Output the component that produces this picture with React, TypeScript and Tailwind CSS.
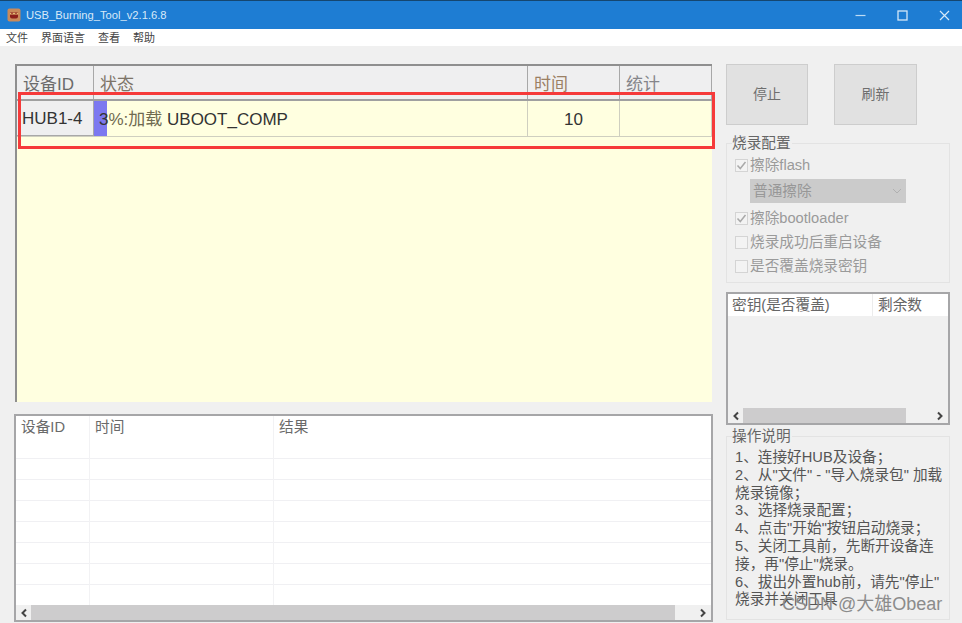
const font = "font-['Liberation_Sans','Noto_Sans_CJK_SC',sans-serif]";

function Chevron({ dir }: { dir: "l" | "r" }) {
  return (
    <svg width="8" height="10" viewBox="0 0 8 10" className="shrink-0">
      <path d={dir === "l" ? "M6 1.5 2.5 5 6 8.5" : "M2 1.5 5.5 5 2 8.5"} fill="none" stroke="#444" strokeWidth="2" />
    </svg>
  );
}

function Scrollbar({ thumbLeft, thumbWidth }: { thumbLeft: string; thumbWidth: string }) {
  return (
    <div className="h-[15px] shrink-0 flex items-center justify-between bg-[#f0f0f0] relative px-[4px]">
      <Chevron dir="l" />
      <div className={`absolute top-0 bottom-0 bg-[#cdcccd] ${thumbLeft} ${thumbWidth}`} />
      <Chevron dir="r" />
    </div>
  );
}

function HeadCell({ w, children, color = "text-[#6b6b6b]" }: { w: string; children: React.ReactNode; color?: string }) {
  return (
    <div className={`${w} h-full border-r border-[#a8a8a8] flex items-end pl-[6px] pb-[2px] text-[17px] leading-[24px] ${color}`}>
      {children}
    </div>
  );
}

function Check({ label, checked }: { label: string; checked?: boolean }) {
  return (
    <div className="flex items-center h-[24px] pl-[8px]">
      <div className="w-[13px] h-[13px] border border-[#d4d4d4] bg-[#f3f3f3] flex items-center justify-center shrink-0">
        {checked && (
          <svg width="11" height="11" viewBox="0 0 11 11">
            <path d="M1.5 5.5 4.3 8.5 9.5 2" fill="none" stroke="#a9a9a9" strokeWidth="1.5" />
          </svg>
        )}
      </div>
      <span className="ml-[2px] text-[14.67px] leading-[20px] text-[#9a9a9a] whitespace-nowrap">{label}</span>
    </div>
  );
}

function Group({ title, className, children }: { title: string; className: string; children: React.ReactNode }) {
  return (
    <div className={`relative border border-[#e3e3e3] ${className}`}>
      <span className="absolute left-[5px] -top-[10px] bg-[#f0f0f0] pr-[1px] text-[14.67px] leading-[18px] text-[#666]">{title}</span>
      {children}
    </div>
  );
}

const rows = [0, 1, 2, 3, 4, 5, 6];

const help = [
  "1、连接好HUB及设备；",
  '2、从"文件" - "导入烧录包" 加载',
  "烧录镜像；",
  "3、选择烧录配置；",
  '4、点击"开始"按钮启动烧录；',
  "5、关闭工具前，先断开设备连",
  '接，再"停止"烧录。',
  '6、拔出外置hub前，请先"停止"',
  "烧录并关闭工具",
];

export default function App() {
  return (
    <div className={`relative w-[962px] h-[623px] overflow-hidden bg-[#f0f0f0] flex flex-col ${font}`}>
      {/* title bar */}
      <div className="h-[29px] shrink-0 bg-[#1e7dd3] border-t border-[#15466f] flex items-center pl-[7px]">
        <svg width="14" height="14" viewBox="0 0 14 14" className="shrink-0">
          <rect x="0.5" y="0.5" width="13" height="13" rx="2" fill="#c98a5a" />
          <path d="M3 4.5h8v4a2 2 0 0 1-2 2H5a2 2 0 0 1-2-2z" fill="#8c1f1a" />
          <path d="M3 4.5l2 1.5 2-1.5 2 1.5 2-1.5v2H3z" fill="#e8c27a" />
        </svg>
        <span className="ml-[5px] text-[11.2px] leading-[16px] text-[#d8e9f8] whitespace-nowrap">USB_Burning_Tool_v2.1.6.8</span>
        <div className="ml-auto flex items-center h-full">
          <div className="w-[36px] flex justify-center">
            <svg width="11" height="11" viewBox="0 0 11 11"><path d="M0.5 5.5h10" stroke="#bcdcf5" strokeWidth="1.2" /></svg>
          </div>
          <div className="w-[48px] flex justify-center">
            <svg width="11" height="11" viewBox="0 0 11 11"><rect x="1" y="1" width="9" height="9" fill="none" stroke="#d5e8f8" strokeWidth="1.3" /></svg>
          </div>
          <div className="w-[36px] flex justify-center">
            <svg width="11" height="11" viewBox="0 0 11 11"><path d="M1 1l9 9M10 1l-9 9" stroke="#d5e8f8" strokeWidth="1.2" /></svg>
          </div>
        </div>
      </div>

      {/* menu */}
      <div className="h-[17px] shrink-0 bg-white flex items-center pl-[6px] gap-[13px] text-[11px] leading-[14px] text-[#444]">
        <span>文件</span>
        <span>界面语言</span>
        <span>查看</span>
        <span>帮助</span>
      </div>

      {/* body */}
      <div className="flex-1 flex pt-[18px] pl-[15px] min-h-0">
        {/* left */}
        <div className="w-[698px] shrink-0 flex flex-col">
          <div className="w-[697px] h-[338px] shrink-0 flex flex-col border-t-2 border-l-2 border-[#8f8f8f] bg-[#ffffe0]">
            <div className="h-[35px] shrink-0 flex bg-[#efeff0] border-b-2 border-[#a0a0a0]">
              <HeadCell w="w-[77px]">设备ID</HeadCell>
              <HeadCell w="w-[434px]" color="text-[#7d7468]">状态</HeadCell>
              <HeadCell w="w-[92px]" color="text-[#9b8064]">时间</HeadCell>
              <HeadCell w="w-[92px]" color="text-[#85858a]">统计</HeadCell>
            </div>
            <div className="h-[36px] shrink-0 flex border-b border-[#cfcfc0] text-[17px] leading-[20px] text-[#333]">
              <div className="w-[77px] bg-[#efeff0] border-r border-b border-[#a8a8a8] flex items-center pl-[5px] pt-[2px]">HUB1-4</div>
              <div className="w-[434px] relative border-r border-[#cfcfc0] flex items-center pl-[5px] pt-[2px] bg-[#ffffe0]">
                <div className="absolute left-0 top-0 bottom-0 w-[13px] bg-[#7c78f0]" />
                <span className="relative whitespace-nowrap">
                  3<span className="text-[#6f6a50]">%:加载</span> UBOOT_COMP
                </span>
              </div>
              <div className="w-[92px] border-r border-[#cfcfc0] flex items-center justify-center pt-[2px]">10</div>
              <div className="w-[92px] border-r border-[#cfcfc0]" />
            </div>
            <div className="flex-1" />
          </div>

          <div className="mt-[12px] -ml-[1px] w-[699px] h-[208px] shrink-0 flex flex-col border-2 border-[#a6a6a8] bg-white">
            <div className="flex-1 relative flex min-h-0 overflow-hidden">
              <div className="absolute inset-x-0 top-0 flex flex-col">
                <div className="h-[22px] flex text-[14.67px] leading-[22px] text-[#6a6a6a]">
                  <div className="w-[74px] pl-[5px]">设备ID</div>
                  <div className="w-[184px] pl-[5px]">时间</div>
                  <div className="pl-[5px]">结果</div>
                </div>
                <div className="h-[21px] border-b border-[#f0f0f3]" />
                {rows.map((r) => (
                  <div key={r} className="h-[21px] border-b border-[#f0f0f3]" />
                ))}
              </div>
              <div className="w-[74px] h-full border-r border-[#f2f2f4] shrink-0 relative" />
              <div className="w-[184px] h-full border-r border-[#f2f2f4] shrink-0 relative" />
            </div>
            <Scrollbar thumbLeft="left-[15px]" thumbWidth="w-[644px]" />
          </div>
        </div>

        {/* right */}
        <div className="ml-[13px] w-[224px] shrink-0 flex flex-col">
          <div className="flex gap-[26px]">
            <button className="w-[82px] h-[61px] bg-[#e1e1e1] border border-[#cdcdcd] text-[14px] text-[#6e6e6e]">停止</button>
            <button className="w-[83px] h-[61px] bg-[#e1e1e1] border border-[#cdcdcd] text-[14px] text-[#6e6e6e]">刷新</button>
          </div>

          <Group title="烧录配置" className="mt-[18px] h-[140px] pt-[9px]">
            <Check label="擦除flash" checked />
            <div className="ml-[23px] mt-[2px] w-[156px] h-[24px] bg-[#cbcbcb] flex items-center pl-[3px] text-[14.67px] text-[#979797]">
              普通擦除
              <svg width="10" height="6" viewBox="0 0 10 6" className="ml-auto mr-[4px]">
                <path d="M1 1l4 4 4-4" fill="none" stroke="#b0b0b0" />
              </svg>
            </div>
            <div className="mt-[3px]"><Check label="擦除bootloader" checked /></div>
            <Check label="烧录成功后重启设备" />
            <Check label="是否覆盖烧录密钥" />
          </Group>

          <div className="mt-[9px] h-[133px] shrink-0 flex flex-col border-2 border-[#a6a6a8]">
            <div className="h-[22px] shrink-0 bg-white flex text-[14.67px] leading-[22px] text-[#666]">
              <div className="w-[145px] pl-[4px] border-r border-[#ececec] whitespace-nowrap">密钥(是否覆盖)</div>
              <div className="pl-[5px]">剩余数</div>
            </div>
            <div className="flex-1" />
            <Scrollbar thumbLeft="left-[15px]" thumbWidth="w-[163px]" />
          </div>

          <Group title="操作说明" className="mt-[11px] h-[184px] pt-[12px]">
            <div className="pl-[8px] text-[14.67px] leading-[17.8px] text-[#555]">
              {help.map((line) => (
                <div key={line} className="whitespace-nowrap">{line}</div>
              ))}
            </div>
          </Group>
        </div>
      </div>

      {/* red annotation box */}
      <div className="absolute left-[18px] top-[92px] w-[697px] h-[57px] border-[3px] border-[#f63a3a] pointer-events-none" />

      {/* watermark */}
      <div className="absolute left-[782px] top-[593px] text-[18px] leading-[22px] text-[#8b8b8b] whitespace-nowrap">CSDN @大雄Obear</div>
    </div>
  );
}
